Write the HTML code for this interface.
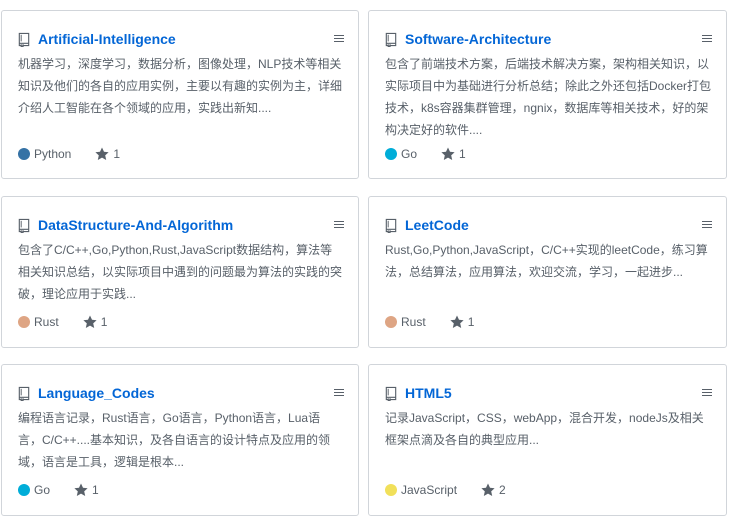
<!DOCTYPE html>
<html><head><meta charset="utf-8"><style>
*{margin:0;padding:0;box-sizing:border-box}
body{width:730px;height:517px;background:#fff;position:relative;overflow:hidden;font-family:"Liberation Sans","Noto Sans CJK SC",sans-serif}
.card{position:absolute;border:1px solid #d1d5da;border-radius:3px;background:#fff}
.t{position:absolute;left:16px;top:18px;height:20px;display:flex;align-items:center;font-size:14px;font-weight:bold;color:#0366d6}
.t svg{margin-right:8px}
.m{position:absolute;right:14px;top:19px}
.d{position:absolute;left:16px;top:42px;right:14px;font-size:12px;line-height:22px;color:#586069}
.f{position:absolute;left:16px;display:flex;align-items:center;font-size:12px;color:#586069}
.dot{width:12px;height:12px;border-radius:50%;margin-right:4px}
.s{margin-left:24px;display:flex;align-items:center}
.s svg{margin-right:4px}
</style></head><body>
<div class="card" style="left:1px;top:10px;width:358px;height:169px">
<div class="t"><svg width="12" height="15" viewBox="0 0 12 16"><path d="M1 1.5h10v10.5H1zM1 12v2.5h2M5 14.5h6v-2.5M3 13v3l1-1 1 1v-3" fill="none" stroke="#586069" stroke-width="1.2"/><path d="M3 3v7" stroke="#586069"/></svg>Artificial-Intelligence</div>
<div class="m"><svg width="10" height="9"><path d="M0 1.5h10M0 4.5h10M0 7.5h10" stroke="#586069"/></svg></div>
<div class="d">机器学习，深度学习，数据分析，图像处理，NLP技术等相关知识及他们的各自的应用实例，主要以有趣的实例为主，详细介绍人工智能在各个领域的应用，实践出新知....</div>
<div class="f" style="top:136px"><span class="dot" style="background:#3572a5"></span>Python<span class="s"><svg width="14" height="14" viewBox="0 0 14 14"><path d="M7 .5l2 4.3 4.6.5-3.4 3.1 1 4.6L7 10.6 2.8 13l1-4.6L.4 5.3 5 4.8z" fill="#586069"/></svg>1</span></div>
</div>
<div class="card" style="left:368px;top:10px;width:359px;height:169px">
<div class="t"><svg width="12" height="15" viewBox="0 0 12 16"><path d="M1 1.5h10v10.5H1zM1 12v2.5h2M5 14.5h6v-2.5M3 13v3l1-1 1 1v-3" fill="none" stroke="#586069" stroke-width="1.2"/><path d="M3 3v7" stroke="#586069"/></svg>Software-Architecture</div>
<div class="m"><svg width="10" height="9"><path d="M0 1.5h10M0 4.5h10M0 7.5h10" stroke="#586069"/></svg></div>
<div class="d" style="right:13px">包含了前端技术方案，后端技术解决方案，架构相关知识，以实际项目中为基础进行分析总结；除此之外还包括Docker打包技术，k8s容器集群管理，ngnix，数据库等相关技术，好的架构决定好的软件....</div>
<div class="f" style="top:136px"><span class="dot" style="background:#00add8"></span>Go<span class="s"><svg width="14" height="14" viewBox="0 0 14 14"><path d="M7 .5l2 4.3 4.6.5-3.4 3.1 1 4.6L7 10.6 2.8 13l1-4.6L.4 5.3 5 4.8z" fill="#586069"/></svg>1</span></div>
</div>
<div class="card" style="left:1px;top:196px;width:358px;height:152px">
<div class="t"><svg width="12" height="15" viewBox="0 0 12 16"><path d="M1 1.5h10v10.5H1zM1 12v2.5h2M5 14.5h6v-2.5M3 13v3l1-1 1 1v-3" fill="none" stroke="#586069" stroke-width="1.2"/><path d="M3 3v7" stroke="#586069"/></svg>DataStructure-And-Algorithm</div>
<div class="m"><svg width="10" height="9"><path d="M0 1.5h10M0 4.5h10M0 7.5h10" stroke="#586069"/></svg></div>
<div class="d">包含了C/C++,Go,Python,Rust,JavaScript数据结构，算法等相关知识总结，以实际项目中遇到的问题最为算法的实践的突破，理论应用于实践...</div>
<div class="f" style="top:118px"><span class="dot" style="background:#dea584"></span>Rust<span class="s"><svg width="14" height="14" viewBox="0 0 14 14"><path d="M7 .5l2 4.3 4.6.5-3.4 3.1 1 4.6L7 10.6 2.8 13l1-4.6L.4 5.3 5 4.8z" fill="#586069"/></svg>1</span></div>
</div>
<div class="card" style="left:368px;top:196px;width:359px;height:152px">
<div class="t"><svg width="12" height="15" viewBox="0 0 12 16"><path d="M1 1.5h10v10.5H1zM1 12v2.5h2M5 14.5h6v-2.5M3 13v3l1-1 1 1v-3" fill="none" stroke="#586069" stroke-width="1.2"/><path d="M3 3v7" stroke="#586069"/></svg>LeetCode</div>
<div class="m"><svg width="10" height="9"><path d="M0 1.5h10M0 4.5h10M0 7.5h10" stroke="#586069"/></svg></div>
<div class="d">Rust,Go,Python,JavaScript，C/C++实现的leetCode，练习算法，总结算法，应用算法，欢迎交流，学习，一起进步...</div>
<div class="f" style="top:118px"><span class="dot" style="background:#dea584"></span>Rust<span class="s"><svg width="14" height="14" viewBox="0 0 14 14"><path d="M7 .5l2 4.3 4.6.5-3.4 3.1 1 4.6L7 10.6 2.8 13l1-4.6L.4 5.3 5 4.8z" fill="#586069"/></svg>1</span></div>
</div>
<div class="card" style="left:1px;top:364px;width:358px;height:152px">
<div class="t"><svg width="12" height="15" viewBox="0 0 12 16"><path d="M1 1.5h10v10.5H1zM1 12v2.5h2M5 14.5h6v-2.5M3 13v3l1-1 1 1v-3" fill="none" stroke="#586069" stroke-width="1.2"/><path d="M3 3v7" stroke="#586069"/></svg>Language_Codes</div>
<div class="m"><svg width="10" height="9"><path d="M0 1.5h10M0 4.5h10M0 7.5h10" stroke="#586069"/></svg></div>
<div class="d">编程语言记录，Rust语言，Go语言，Python语言，Lua语言，C/C++....基本知识，及各自语言的设计特点及应用的领域，语言是工具，逻辑是根本...</div>
<div class="f" style="top:118px"><span class="dot" style="background:#00add8"></span>Go<span class="s"><svg width="14" height="14" viewBox="0 0 14 14"><path d="M7 .5l2 4.3 4.6.5-3.4 3.1 1 4.6L7 10.6 2.8 13l1-4.6L.4 5.3 5 4.8z" fill="#586069"/></svg>1</span></div>
</div>
<div class="card" style="left:368px;top:364px;width:359px;height:152px">
<div class="t"><svg width="12" height="15" viewBox="0 0 12 16"><path d="M1 1.5h10v10.5H1zM1 12v2.5h2M5 14.5h6v-2.5M3 13v3l1-1 1 1v-3" fill="none" stroke="#586069" stroke-width="1.2"/><path d="M3 3v7" stroke="#586069"/></svg>HTML5</div>
<div class="m"><svg width="10" height="9"><path d="M0 1.5h10M0 4.5h10M0 7.5h10" stroke="#586069"/></svg></div>
<div class="d">记录JavaScript，CSS，webApp，混合开发，nodeJs及相关框架点滴及各自的典型应用...</div>
<div class="f" style="top:118px"><span class="dot" style="background:#f1e05a"></span>JavaScript<span class="s"><svg width="14" height="14" viewBox="0 0 14 14"><path d="M7 .5l2 4.3 4.6.5-3.4 3.1 1 4.6L7 10.6 2.8 13l1-4.6L.4 5.3 5 4.8z" fill="#586069"/></svg>2</span></div>
</div>
</body></html>
